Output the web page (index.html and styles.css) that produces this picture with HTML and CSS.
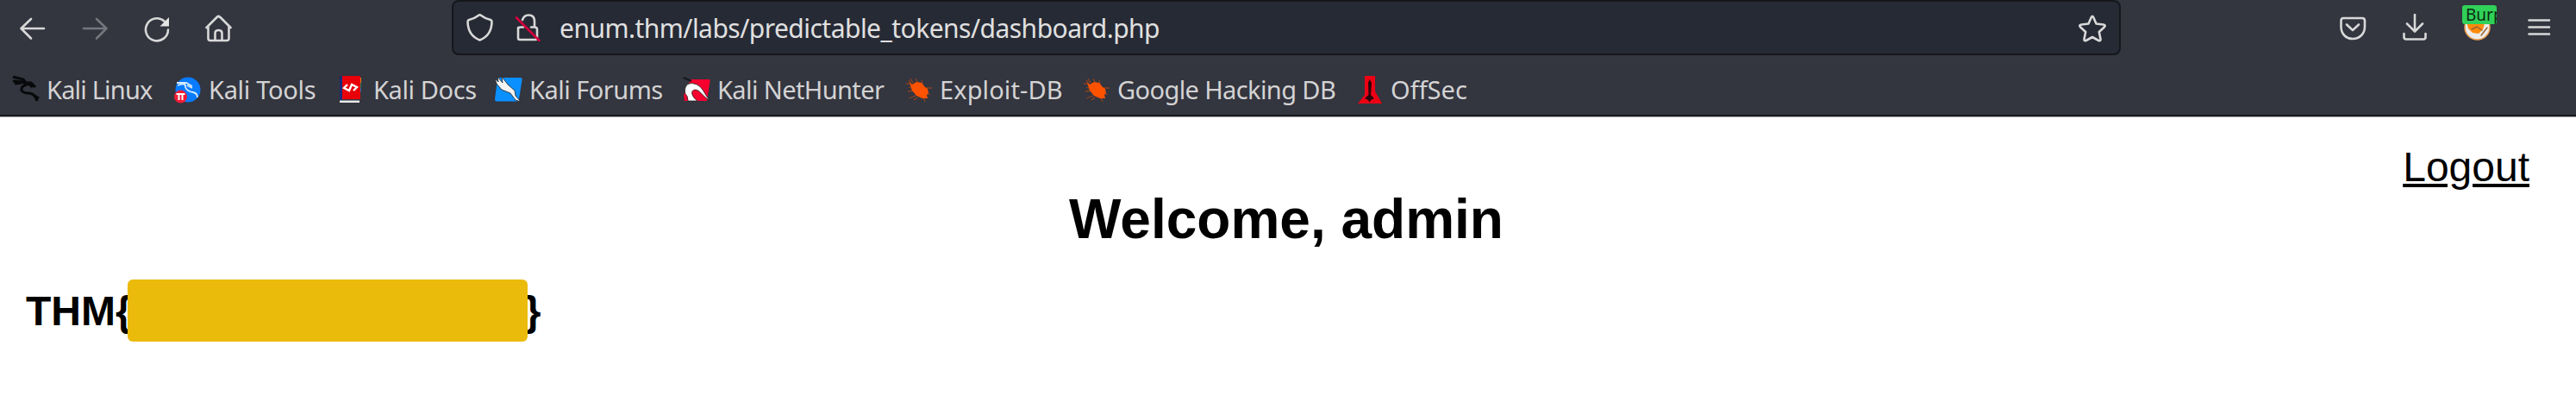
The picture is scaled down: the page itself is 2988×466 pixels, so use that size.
FILE: index.html
```html
<!DOCTYPE html>
<html lang="en">
<head>
<meta charset="utf-8">
<title>Dashboard</title>
<link rel="stylesheet" href="styles.css">
</head>
<body>
<header class="chrome">
  <div class="toolbar">
    <nav class="nav">
      <svg class="icon" viewBox="0 0 32 32"><path d="M29 16H3M14 5L2.500 16L14 27.500"/></svg>
      <svg class="icon dim" viewBox="0 0 32 32"><path d="M3 16H29M18 5L29.500 16L18 27.500"/></svg>
      <svg class="icon" viewBox="0 0 32 32"><path d="M29 17.500A13 13 0 1 1 24.500 7.500"/><path class="solid" d="M30 3v10.500H19.500z"/></svg>
      <svg class="icon" viewBox="0 0 32 32"><path d="M1.500 15L13.500 3Q15.500 1 17.500 3L29.500 15M3.500 14V27.500Q3.500 30 6 30H25Q27.500 30 27.500 27.500V14M11.500 30V21.500Q11.500 18 15.500 18Q19.500 18 19.500 21.500V30"/></svg>
    </nav>
    <div class="urlbar">
      <svg class="icon" viewBox="0 0 32 32"><path d="M15.500 1C11.500 4 7.500 6 3 7Q1.500 7.500 1.500 9.500C1.800 20.500 6.500 27 15.500 30.500C24.500 27 29.200 20.500 29.500 9.500Q29.500 7.500 28 7C23.500 6 19.500 4 15.500 1Z"/></svg>
      <svg class="icon lock" viewBox="0 0 32 32"><path d="M9 7Q11 1.500 16 1.500Q23 1.500 23 8.500V15M4 16V28Q4 30 6 30H24Q26 30 26 28V18Q26 15.500 23 15.500H19M4 18Q4 15.500 7 15.500H10"/><path class="slash" d="M2 4.500L28.500 31"/></svg>
      <span class="url">enum.thm/labs/predictable_tokens/dashboard.php</span>
      <svg class="icon star" viewBox="0 0 32 32"><path d="M14.800 3Q16 .8 17.200 3L20.500 10.500L28.800 11.500Q32 12 29.800 14.500L23.800 20L25.500 28.300Q25.800 31 23.300 30L16 26L8.700 30Q6.200 31 6.500 28.300L8.200 20L2.200 14.500Q0 12 3.200 11.500L11.500 10.500Z"/></svg>
    </div>
    <div class="actions">
      <svg class="icon" viewBox="0 0 32 32"><path d="M4 5H26Q29 5 29 8V15C29 23 23 29 15 29C7 29 1.500 23 1.500 15V8Q1.500 5 4 5ZM8 12.500L15 19L22 12.500"/></svg>
      <svg class="icon" viewBox="0 0 32 32"><path d="M15 1V20M6 11.500L15 20.500L24 11.500M2.500 23V27Q2.500 29.500 5 29.500H25Q27.500 29.500 27.500 27V23"/></svg>
      <div class="proxy">
        <svg class="icon" viewBox="0 0 32 32"><circle class="fox-rim" cx="15.500" cy="15.500" r="14.500"/><path class="fox" d="M3 8H25L22 18L17 23L10 22L5 17Z"/><path class="fox-line" d="M9 18L15 15L21 19M20 25L27 16"/></svg>
        <span class="badge">Burp</span>
      </div>
      <svg class="icon" viewBox="0 0 32 32"><path d="M3.500 7.500H27M3.500 15.500H27M3.500 23.500H27"/></svg>
    </div>
  </div>
  <nav class="bookmarks">
    <a class="bm b1"><svg class="fav" viewBox="0 0 32 32"><path class="dragon" d="M1 1L13 4L16 8L22 8L27 13M1 6L12 7L17 10Q10 12 11 17Q13 20 20 20Q27 21 29 29M3 9L11 8M26 23L31 26M19 9L24 13"/></svg><span>Kali Linux</span></a>
    <a class="bm b2"><svg class="fav" viewBox="0 0 32 32"><circle cx="16" cy="16" r="14.500" fill="#087bff"/><path class="wave" d="M3 8L14 8L21 12M4 11Q14 7 13 13Q15 18 22 19Q27 20 27 25M15 11L21 14"/><circle cx="7.500" cy="24" r="7.500" fill="#f21c35"/><path d="M2.500 21H12.500M5.500 21V28M9.500 21V28" stroke="#fff" stroke-width="2"/></svg><span>Kali Tools</span></a>
    <a class="bm b3"><svg class="fav" viewBox="0 0 32 32"><path d="M5 0H26V27H5Z" fill="#e70009"/><path d="M2 1L5 0V27L2 30Z" fill="#172c78"/><path d="M26 2H27V8H26Z" fill="#d98019"/><path d="M26 8H27V14H26Z" fill="#16805c"/><path d="M26 14H27V19H26Z" fill="#176cae"/><path d="M2 28.500H25V31H2Z" fill="#e8e8e8"/><path class="code" d="M11 10L7 14L13 17L16 10L22 13L18 17"/></svg><span>Kali Docs</span></a>
    <a class="bm b4"><svg class="fav" viewBox="0 0 32 32"><path d="M4 2H30Q32 2 31.500 5L28 27Q27.500 29.500 25 29.500H2Q0 29.500 0 27L3 4Z" fill="#0a90ff"/><path d="M0 3L4 7L3 1L9 8L8 1L15 10L23 17L24 23L30 30L24 28L18 20L8 16L2 9Z" fill="#f3f3f3" stroke="#222" stroke-width=".8"/></svg><span>Kali Forums</span></a>
    <a class="bm b5"><svg class="fav" viewBox="0 0 32 32"><path d="M9 4H31Q32 4 31.500 6L28 29H2L1 22Z" fill="#f5002f"/><path d="M1 2L10 6" stroke="#15171c" stroke-width="2"/><path d="M3 21C1 13 5 7 13 9C23 11 24 20 31 28C23 24 21 17 15 16C8 16 10 24 17 29H6Q6 23 3 21Z" fill="#fff" stroke="#222" stroke-width=".8"/></svg><span>Kali NetHunter</span></a>
    <a class="bm b6"><svg class="fav" viewBox="0 0 32 32"><path class="legs" d="M1 9H7L4 5M9 8L6 3M14 7L12 3M20 10L19 5M24 14H31M25 20L29 22M4 13L7 14M3 18L9 17M4 26L12 23M14 25L10 28M21 25L23 30"/><path class="bug" d="M5 8L8 10L13 7L19 8L23 13L26 15L27 20L25 22L26 26L20 26L13 23L8 17Z"/></svg><span>Exploit-DB</span></a>
    <a class="bm b7"><svg class="fav" viewBox="0 0 32 32"><path class="legs" d="M1 9H7L4 5M9 8L6 3M14 7L12 3M20 10L19 5M24 14H31M25 20L29 22M4 13L7 14M3 18L9 17M4 26L12 23M14 25L10 28M21 25L23 30"/><path class="bug" d="M5 8L8 10L13 7L19 8L23 13L26 15L27 20L25 22L26 26L20 26L13 23L8 17Z"/></svg><span>Google Hacking DB</span></a>
    <a class="bm b8"><svg class="fav" viewBox="0 0 32 32"><path d="M10 0H22V18L30 32H2L10 22Z" fill="#ed0014"/><path d="M15.500 4L18 8L17 22L21 26L17 28L15.500 31L14 28L10 26L14.500 22L14 8Z" fill="#29040b"/></svg><span>OffSec</span></a>
  </nav>
</header>
<main class="page">
  <a class="logout">Logout</a>
  <h1 class="welcome">Welcome, admin</h1>
  <h2 class="flag"><span>THM{</span><span class="mask"></span><span>}</span></h2>
</main>
</body>
</html>
```
FILE: styles.css
```css
body { margin: 0; background: #fff; color: #000; font-family: "Liberation Sans", Arial, sans-serif; }
.chrome { box-sizing: border-box; height: 136px; background: #33353f; border-bottom: 1px solid #aaa; box-shadow: inset 0 -2px #17181c; font-family: "Noto Sans", sans-serif; color: #d3d3d3; }
.toolbar { display: flex; height: 70px; }
.nav { display: flex; width: 524px; box-sizing: border-box; padding: 17px 0 0 22px; gap: 40px; }
.icon { display: block; flex: none; width: 32px; height: 32px; fill: none; stroke: #d8d8d8; stroke-width: 2.6; stroke-linecap: round; stroke-linejoin: round; }
.dim { stroke: #74767d; }
.solid { fill: #e5e5e5; stroke: none; }
.urlbar { display: flex; box-sizing: border-box; width: 1936px; height: 64px; padding: 14px 15px 0; border: 2px solid #15171c; border-radius: 8px; background: #262a35; }
.lock { margin-left: 24px; }
.slash { stroke: #d5003d; }
.url { margin: -2px auto 0 20px; font-size: 30px; line-height: 38px; letter-spacing: -0.53px; color: #e0e0e0; }
.star { margin-top: 1px; }
.actions { display: flex; gap: 40px; padding: 16px 0 0 254px; }
.proxy { position: relative; width: 32px; }
.badge { position: absolute; left: -2px; top: -10px; width: 36px; height: 22px; padding-left: 4px; overflow: hidden; border-radius: 3px; background: #30d158; color: #0b2913; font-size: 19px; line-height: 22px; }
.fox-rim { fill: #ececec; stroke: #eea04e; stroke-width: 1.5; }
.fox { fill: #ff8b0b; stroke: none; }
.fox-line { stroke: #9b6231; stroke-width: 1.5; }
.bookmarks { display: flex; padding: 14px 0 0 14px; }
.bm { display: flex; gap: 8px; height: 40px; flex: none; font-size: 29px; line-height: 39px; white-space: nowrap; }
.fav { display: block; width: 32px; height: 32px; margin-top: 4px; flex: none; fill: none; }
.b1 { width: 188px; letter-spacing: -0.8px; }
.b2 { width: 190px; letter-spacing: -0.3px; }
.b3 { width: 182px; letter-spacing: -0.4px; gap: 9px; }
.b4 { width: 218px; letter-spacing: -0.5px; }
.b5 { width: 258px; letter-spacing: -0.6px; }
.b6 { width: 206px; letter-spacing: 0.1px; }
.b7 { width: 317px; letter-spacing: -0.6px; }
.dragon { stroke: #08090b; stroke-width: 3; }
.wave { stroke: #d5ebff; stroke-width: 1.8; }
.code { stroke: #fff; stroke-width: 2.4; }
.legs { stroke: #8b4222; stroke-width: 1.3; }
.bug { fill: #ff5200; }
.page { display: flex; flex-direction: column; padding: 30px 30px 0; }
.logout { align-self: flex-end; margin-right: 24px; font-size: 48px; line-height: 56px; text-decoration: underline; }
.welcome { margin: -5px 4px 0 0; text-align: center; font-size: 64px; line-height: 74px; }
.flag { display: flex; align-items: center; margin: 33px 0 0; height: 72px; font-size: 48px; line-height: 72px; }
.flag span { padding-top: 1px; }
.flag .mask { box-sizing: border-box; padding: 0; width: 464px; height: 72px; margin: 0 -3px 0 -5px; border-radius: 6px; background: #ebbb0b; z-index: 1; }
```
